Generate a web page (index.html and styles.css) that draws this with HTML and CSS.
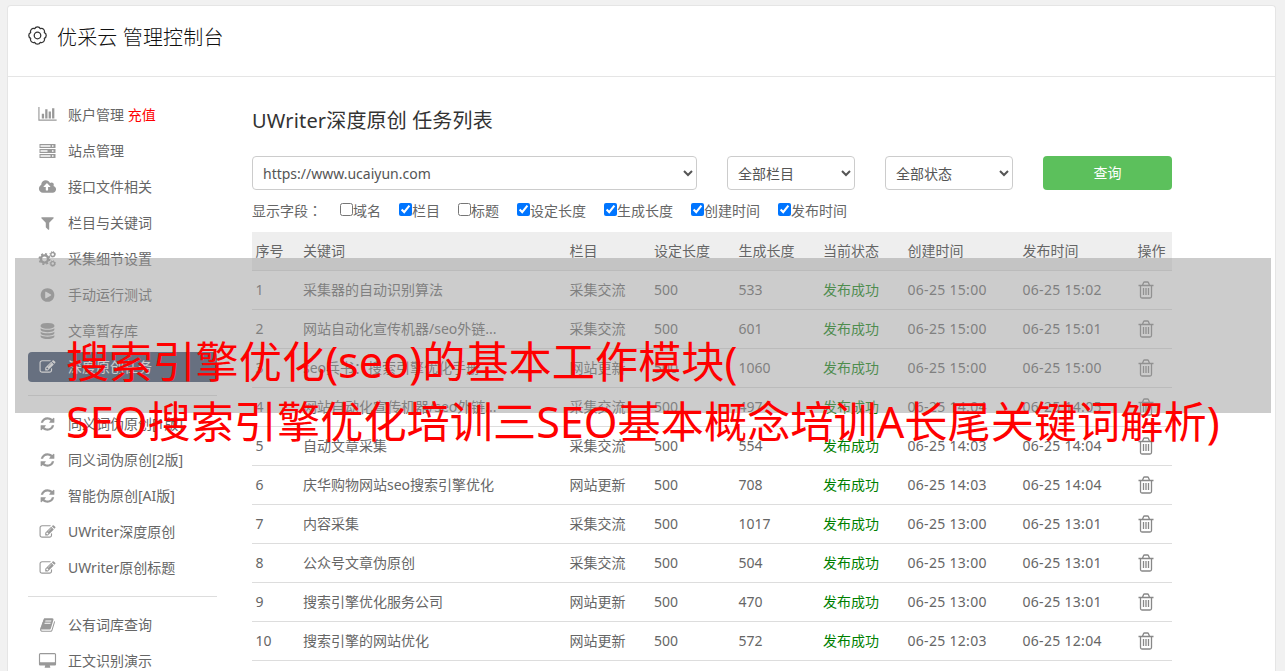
FILE: index.html
```html
<!DOCTYPE html>
<html lang="zh-CN">
<head>
    <meta charset="utf-8">
    <title>优采云 管理控制台</title>
    <link rel="stylesheet" href="styles.css">
</head>
<body>
    <!-- Icons -->
    <svg class="sprite">
        <symbol id="chart" viewBox="0 0 2048 1792"><path d="M640 768v512h-256v-512h256zm384-512v1024h-256v-1024h256zm1024 1152v128h-2048v-1536h128v1408h1920zm-640-896v768h-256v-768h256zm384-384v1152h-256v-1152h256z"/></symbol>
        <symbol id="server" viewBox="0 0 16 16"><path fill-rule="evenodd" d="M0 1h16v4H0zM1 2.300v1.500h10V2.300zM12.500 2.300v1.500h1.500V2.300zM0 6h16v4H0zM1 7.300v1.500h7V7.300zM12.500 7.300v1.500h1.500V7.300zM0 11h16v4H0zM1 12.300v1.500h10v-1.500zM12.500 12.300v1.500h1.500v-1.500z"/></symbol>
        <symbol id="upload" viewBox="-64 0 1920 1792"><path d="M1216 864q0-14-9-23l-352-352q-9-9-23-9t-23 9l-351 351q-10 12-10 24 0 14 9 23t23 9h224v352q0 13 9.500 22.500t22.500 9.500h192q13 0 22.500-9.500t9.500-22.500v-352h224q13 0 22.500-9.500t9.500-22.500zm640 288q0 159-112.500 271.500t-271.500 112.500h-1088q-185 0-316.500-131.500t-131.500-316.500q0-130 70-240t188-165q-2-30-2-43 0-212 150-362t362-150q156 0 285.500 87t188.500 231q71-62 166-62 106 0 181 75t75 181q0 76-41 138 130 31 213.500 135.500t83.500 238.500z"/></symbol>
        <symbol id="filter" viewBox="0 0 1792 1792"><path d="M1595 295q17 41-14 70l-493 493v742q0 42-39 59-13 5-25 5-27 0-45-19l-256-256q-19-19-19-45v-486l-493-493q-31-29-14-70 17-39 59-39h1280q42 0 59 39z"/></symbol>
        <symbol id="cogs" viewBox="0 0 18 16"><g fill="none" stroke="currentColor"><circle cx="6" cy="8" r="3.600" stroke-width="2.400"/><circle cx="6" cy="8" r="5.200" stroke-width="1.600" stroke-dasharray="2.040 2.040"/><circle cx="14.200" cy="3.400" r="1.900" stroke-width="1.300"/><circle cx="14.200" cy="3.400" r="2.800" stroke-width="1" stroke-dasharray="1.100 1.100"/><circle cx="14.200" cy="12.600" r="1.900" stroke-width="1.300"/><circle cx="14.200" cy="12.600" r="2.800" stroke-width="1" stroke-dasharray="1.100 1.100"/></g></symbol>
        <symbol id="play" viewBox="0 0 1792 1792"><path d="M896 128q209 0 385.500 103t279.500 279.500 103 385.500-103 385.500-279.500 279.500-385.500 103-385.500-103-279.500-279.500-103-385.500 103-385.500 279.500-279.500 385.500-103zm384 823q32-18 32-55t-32-55l-544-320q-31-19-64-1-32 19-32 56v640q0 37 32 56 16 8 32 8 17 0 32-9z"/></symbol>
        <symbol id="database" viewBox="0 0 1792 1792"><path d="M896 768q237 0 443-43t325-127v170q0 69-103 128t-280 93.500-385 34.500-385-34.500-280-93.500-103-128v-170q119 84 325 127t443 43zm0 768q237 0 443-43t325-127v170q0 69-103 128t-280 93.500-385 34.500-385-34.500-280-93.500-103-128v-170q119 84 325 127t443 43zm0-384q237 0 443-43t325-127v170q0 69-103 128t-280 93.500-385 34.500-385-34.500-280-93.500-103-128v-170q119 84 325 127t443 43zm0-1152q208 0 385 34.500t280 93.500 103 128v128q0 69-103 128t-280 93.500-385 34.500-385-34.500-280-93.500-103-128v-128q0-69 103-128t280-93.500 385-34.500z"/></symbol>
        <symbol id="edit" viewBox="0 0 1792 1792"><path d="M888 1184l116-116-152-152-116 116v56h96v96h56zm440-720q-16-16-33 1l-350 350q-17 17-1 33t33-1l350-350q17-17 1-33zm80 594v190q0 119-84.500 203.500t-203.500 84.500h-832q-119 0-203.500-84.500t-84.500-203.500v-832q0-119 84.500-203.500t203.500-84.500h832q63 0 117 25 15 7 18 23 3 17-9 29l-49 49q-14 14-32 8-23-6-45-6h-832q-66 0-113 47t-47 113v832q0 66 47 113t113 47h832q66 0 113-47t47-113v-126q0-13 9-22l64-64q15-15 35-7t20 29zm-96-738l288 288-672 672h-288v-288zm444 132l-92 92-288-288 92-92q28-28 68-28t68 28l152 152q28 28 28 68t-28 68z"/></symbol>
        <symbol id="refresh" viewBox="0 0 1792 1792"><path d="M1639 1056q0 5-1 7-64 268-268 434.500t-478 166.500q-146 0-282.500-55t-243.500-157l-129 129q-19 19-45 19t-45-19-19-45v-448q0-26 19-45t45-19h448q26 0 45 19t19 45-19 45l-137 137q71 66 161 102t187 36q134 0 250-65t186-179q11-17 53-117 8-23 30-23h192q13 0 22.500 9.500t9.500 22.500zm25-800v448q0 26-19 45t-45 19h-448q-26 0-45-19t-19-45 19-45l138-138q-148-137-349-137-134 0-250 65t-186 179q-11 17-53 117-8 23-30 23h-199q-13 0-22.500-9.500t-9.500-22.500v-7q65-268 270-434.500t480-166.500q146 0 284 55.500t245 156.500l130-129q19-19 45-19t45 19 19 45z"/></symbol>
        <symbol id="book" viewBox="0 0 1792 1792"><path d="M1703 478q40 57 18 129l-275 906q-19 64-76.500 107.500t-122.500 43.500h-923q-77 0-148.500-53.500t-99.500-131.500q-24-67-2-127 0-4 3-27t4-37q1-8-3-21.500t-3-19.500q2-11 8-21t16.500-23.500 16.500-23.500q23-38 45-91.500t30-91.500q3-10 .5-30t-.5-28q3-11 17-28t17-23q21-36 42-92t25-90q1-9-2.500-32t.5-28q4-13 22-30.500t22-22.500q19-26 42.500-84.500t27.500-96.500q1-8-3-25.500t-2-26.500q2-8 9-18t18-23 17-21q8-12 16.500-30.500t15-35 16-36 19.500-32 26.500-23.500 36-11.500 47.500 5.500l-1 3q38-9 51-9h761q74 0 114 56t18 130l-274 906q-36 119-71.500 153.500t-128.500 34.500h-869q-27 0-38 15-11 16-1 43 24 70 144 70h923q29 0 56-15.500t35-41.500l300-987q7-22 5-57 38 15 59 43zm-1064 2q-4 13 2 22.500t20 9.500h608q13 0 25.500-9.500t16.500-22.500l21-64q4-13-2-22.500t-20-9.500h-608q-13 0-25.500 9.500t-16.500 22.500zm-83 256q-4 13 2 22.500t20 9.500h608q13 0 25.500-9.500t16.500-22.500l21-64q4-13-2-22.500t-20-9.500h-608q-13 0-25.500 9.500t-16.500 22.500z"/></symbol>
        <symbol id="desktop" viewBox="-64 0 1920 1792"><path d="M1728 992v-832q0-13-9.500-22.500t-22.500-9.500h-1600q-13 0-22.500 9.500t-9.500 22.500v832q0 13 9.500 22.500t22.500 9.500h1600q13 0 22.500-9.500t9.500-22.500zm128-832v1088q0 66-47 113t-113 47h-544q0 37 16 77.500t32 71 16 43.500q0 26-19 45t-45 19h-512q-26 0-45-19t-19-45q0-14 16-44t32-70 16-78h-544q-66 0-113-47t-47-113v-1088q0-66 47-113t113-47h1600q66 0 113 47t47 113z"/></symbol>
        <symbol id="gear" viewBox="-9 -9 18 18"><g fill="none" stroke="currentColor" stroke-width="1.200" stroke-linejoin="round"><circle r="3.100"/><path d="M6.470 2.680A2.900 2.900 0 0 1 2.680 6.470A2.900 2.900 0 0 1-2.680 6.470A2.900 2.900 0 0 1-6.470 2.680A2.900 2.900 0 0 1-6.470-2.680A2.900 2.900 0 0 1-2.680-6.470A2.900 2.900 0 0 1 2.680-6.470A2.900 2.900 0 0 1 6.470-2.680A2.900 2.900 0 0 1 6.470 2.680z"/></g></symbol>
        <symbol id="trash" viewBox="0 0 16 18"><path fill="none" stroke="currentColor" stroke-width="1.300" d="M.5 4.500h15M2.500 4.500v11q0 1.500 1.500 1.500h8q1.500 0 1.500-1.500v-11M4.500 4.200l1-2.500q.3-.7 1-.7h3q.7 0 1 .7l1 2.500M5.500 7v7M8 7v7M10.500 7v7"/></symbol>
    </svg>

    <div class="panel">
        <div class="panel-head">
            <svg class="gear"><use href="#gear"/></svg>
            <h1>优采云 管理控制台</h1>
        </div>
        <div class="panel-body">
            <!-- Side menu -->
            <ul class="menu">
                <li><svg><use href="#chart"/></svg>账户管理&nbsp;<span class="pay">充值</span></li>
                <li><svg><use href="#server"/></svg>站点管理</li>
                <li><svg><use href="#upload"/></svg>接口文件相关</li>
                <li><svg><use href="#filter"/></svg>栏目与关键词</li>
                <li><svg><use href="#cogs"/></svg>采集细节设置</li>
                <li><svg><use href="#play"/></svg>手动运行测试</li>
                <li><svg><use href="#database"/></svg>文章暂存库</li>
                <li class="active"><svg><use href="#edit"/></svg>深度原创任务</li>
                <li class="line"></li>
                <li><svg><use href="#refresh"/></svg>同义词伪原创[1版]</li>
                <li><svg><use href="#refresh"/></svg>同义词伪原创[2版]</li>
                <li><svg><use href="#refresh"/></svg>智能伪原创[AI版]</li>
                <li><svg><use href="#edit"/></svg>UWriter深度原创</li>
                <li><svg><use href="#edit"/></svg>UWriter原创标题</li>
                <li class="line"></li>
                <li><svg><use href="#book"/></svg>公有词库查询</li>
                <li><svg><use href="#desktop"/></svg>正文识别演示</li>
            </ul>

            <!-- Task list -->
            <div class="content">
                <h2>UWriter深度原创 任务列表</h2>
                <div class="search">
                    <select><option>https://www.ucaiyun.com</option></select>
                    <select><option>全部栏目</option></select>
                    <select><option>全部状态</option></select>
                    <button>查询</button>
                </div>
                <div class="fields">
                    <span>显示字段<i lang="zh-TW">：</i></span>
                    <label><input type="checkbox">域名</label>
                    <label><input type="checkbox" checked>栏目</label>
                    <label><input type="checkbox">标题</label>
                    <label><input type="checkbox" checked>设定长度</label>
                    <label><input type="checkbox" checked>生成长度</label>
                    <label><input type="checkbox" checked>创建时间</label>
                    <label><input type="checkbox" checked>发布时间</label>
                </div>
                <table>
                    <colgroup>
                        <col class="c-no"><col class="c-key"><col class="c-mid"><col class="c-mid"><col class="c-mid"><col class="c-mid"><col class="c-time"><col class="c-time"><col>
                    </colgroup>
                    <thead>
                        <tr><th>序号</th><th>关键词</th><th>栏目</th><th>设定长度</th><th>生成长度</th><th>当前状态</th><th>创建时间</th><th>发布时间</th><th>操作</th></tr>
                    </thead>
                    <tbody>
                        <tr><td>1</td><td>采集器的自动识别算法</td><td>采集交流</td><td>500</td><td>533</td><td class="ok">发布成功</td><td class="time">06-25 15:00</td><td class="time">06-25 15:02</td><td><svg><use href="#trash"/></svg></td></tr>
                        <tr><td>2</td><td>网站自动化宣传机器/seo外链...</td><td>采集交流</td><td>500</td><td>601</td><td class="ok">发布成功</td><td class="time">06-25 15:00</td><td class="time">06-25 15:01</td><td><svg><use href="#trash"/></svg></td></tr>
                        <tr><td>3</td><td>seo兵书：搜索引擎优化手册</td><td>网站更新</td><td>500</td><td>1060</td><td class="ok">发布成功</td><td class="time">06-25 15:00</td><td class="time">06-25 15:00</td><td><svg><use href="#trash"/></svg></td></tr>
                        <tr><td>4</td><td>网站自动化宣传机器/seo外链...</td><td>采集交流</td><td>500</td><td>497</td><td class="ok">发布成功</td><td class="time">06-25 14:04</td><td class="time">06-25 14:05</td><td><svg><use href="#trash"/></svg></td></tr>
                        <tr><td>5</td><td>自动文章采集</td><td>采集交流</td><td>500</td><td>554</td><td class="ok">发布成功</td><td class="time">06-25 14:03</td><td class="time">06-25 14:04</td><td><svg><use href="#trash"/></svg></td></tr>
                        <tr><td>6</td><td>庆华购物网站seo搜索引擎优化</td><td>网站更新</td><td>500</td><td>708</td><td class="ok">发布成功</td><td class="time">06-25 14:03</td><td class="time">06-25 14:04</td><td><svg><use href="#trash"/></svg></td></tr>
                        <tr><td>7</td><td>内容采集</td><td>采集交流</td><td>500</td><td>1017</td><td class="ok">发布成功</td><td class="time">06-25 13:00</td><td class="time">06-25 13:01</td><td><svg><use href="#trash"/></svg></td></tr>
                        <tr><td>8</td><td>公众号文章伪原创</td><td>采集交流</td><td>500</td><td>504</td><td class="ok">发布成功</td><td class="time">06-25 13:00</td><td class="time">06-25 13:01</td><td><svg><use href="#trash"/></svg></td></tr>
                        <tr><td>9</td><td>搜索引擎优化服务公司</td><td>网站更新</td><td>500</td><td>470</td><td class="ok">发布成功</td><td class="time">06-25 13:00</td><td class="time">06-25 13:01</td><td><svg><use href="#trash"/></svg></td></tr>
                        <tr><td>10</td><td>搜索引擎的网站优化</td><td>网站更新</td><td>500</td><td>572</td><td class="ok">发布成功</td><td class="time">06-25 12:03</td><td class="time">06-25 12:04</td><td><svg><use href="#trash"/></svg></td></tr>
                    </tbody>
                </table>
            </div>
        </div>
    </div>

    <!-- Caption over the page -->
    <div class="mask"></div>
    <div class="caption">搜索引擎优化(seo)的基本工作模块(<br>SEO搜索引擎优化培训三SEO基本概念培训A长尾关键词解析)</div>
</body>
</html>
```
FILE: styles.css
```css
* {
    box-sizing: border-box;
}
body {
    margin: 0;
    padding: 5px 9px 0 7px;
    height: 671px;
    overflow: hidden;
    position: relative;
    background: #f1f1f1;
    color: #666;
    font-family: "Noto Sans", "Noto Sans CJK SC", sans-serif;
    font-size: 14px;
    line-height: 20px;
}
.sprite {
    display: none;
}
svg {
    fill: currentColor;
}
h1, h2 {
    margin: 0;
    font-size: 20px;
    font-weight: 400;
    line-height: 28px;
    letter-spacing: 0.15px;
    color: #333;
}
h1 {
    font-weight: 300;
    color: #111;
}
.panel {
    height: 666px;
    overflow: hidden;
    background: #fff;
    border: 1px solid #e5e5e5;
    border-bottom: 0;
    border-radius: 4px 4px 0 0;
}
.panel-head {
    display: flex;
    height: 71px;
    padding: 18px 20px 0;
    border-bottom: 1px solid #e5e5e5;
}
.gear {
    width: 19px;
    height: 19px;
    margin: 2px 10px 0 0;
    color: #333;
}
.panel-body {
    display: flex;
    height: 594px;
    padding: 23px 20px 0;
    overflow: hidden;
}

/* side menu */
.menu {
    list-style: none;
    width: 189px;
    margin: 0 35px 0 0;
    padding: 0;
}
.menu li {
    display: flex;
    align-items: center;
    height: 30px;
    margin-bottom: 6px;
    padding-left: 10px;
    border-radius: 4px;
}
.menu svg {
    width: 19px;
    height: 16px;
    margin-right: 11px;
    color: #999;
}
.menu .active {
    background: #354767;
    color: #fff;
}
.menu .active svg {
    color: #fff;
}
.menu .line {
    height: 1px;
    margin: 13px 0;
    border-radius: 0;
    background: #ddd;
}
.pay {
    color: red;
}

/* content */
.content {
    width: 920px;
    padding-top: 7px;
}
.search {
    display: flex;
    gap: 30px;
    margin-top: 21px;
}
.search select {
    width: 128px;
    height: 34px;
    padding: 0 8px 0 6px;
    padding: 0 6px;
    border: 1px solid #ccc;
    border-radius: 4px;
    background: #fff;
    color: #555;
    font: inherit;
}
.search select:first-child {
    width: 445px;
}
.search button {
    width: 129px;
    height: 34px;
    border: 0;
    border-radius: 4px;
    background: #5cc05c;
    color: #fff;
    font: inherit;
}
.fields {
    display: flex;
    height: 42px;
    padding-top: 11px;
}
.fields span {
    width: 88px;
}
.fields i {
    font-family: "Noto Sans CJK TC", sans-serif;
    font-style: normal;
    line-height: 1;
}
.fields label {
    display: flex;
    margin-right: 18px;
}
.fields input {
    width: 13px;
    height: 13px;
    margin: 2px 0 0;
}
table {
    width: 920px;
    table-layout: fixed;
    border-collapse: separate;
    border-spacing: 0;
}
.c-no { width: 47.5px; }
.c-key { width: 266.5px; }
.c-mid { width: 84.5px; }
.c-time { width: 115px; }
th, td {
    height: 39px;
    padding: 0 0 0 3.5px;
    border-bottom: 1px solid #ddd;
    font-weight: 400;
    text-align: left;
    white-space: nowrap;
}
th {
    background: #eee;
}
td svg {
    display: block;
    width: 16px;
    height: 18px;
    color: #888;
}
.time {
    letter-spacing: 0.3px;
}
.ok {
    color: green;
}

/* caption */
.mask {
    position: absolute;
    left: 15px;
    top: 258px;
    width: 1256px;
    height: 155px;
    background: rgba(153, 153, 153, 0.5);
}
.caption {
    position: absolute;
    left: 66px;
    top: 332px;
    color: red;
    font-size: 43.2px;
    line-height: 60px;
    white-space: nowrap;
}
```
